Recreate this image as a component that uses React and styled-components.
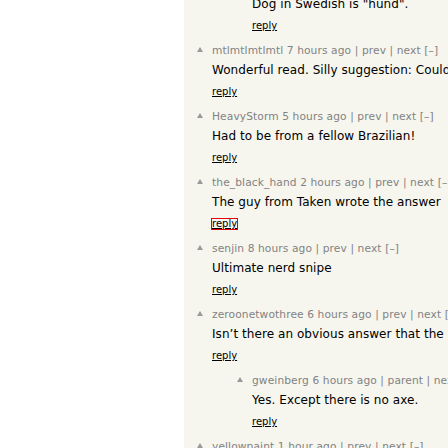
import React from 'react';
import styled, { createGlobalStyle } from 'styled-components';

const comments = [
    { level: 1, user: "", age: "", text: "Dog in Swedish is \"hund\".", hidden: true },
    { level: 0, user: "mtlmtlmtlmtl", age: "7 hours ago", nav: "prev", text: "Wonderful read. Silly suggestion: Could you add a map of where each word is used?" },
    { level: 0, user: "HeavyStorm", age: "5 hours ago", nav: "prev", text: "Had to be from a fellow Brazilian!" },
    { level: 0, user: "the_black_hand", age: "2 hours ago", nav: "prev", text: "The guy from Taken wrote the answer", focused: true },
    { level: 0, user: "senjin", age: "8 hours ago", nav: "prev", text: "Ultimate nerd snipe" },
    { level: 0, user: "zeroonetwothree", age: "6 hours ago", nav: "prev", text: "Isn\u2019t there an obvious answer that the article somehow missed?" },
    { level: 1, user: "gweinberg", age: "6 hours ago", nav: "parent", text: "Yes. Except there is no axe." },
    { level: 0, user: "yellowpaint", age: "1 hour ago", nav: "prev", text: "Fun read." },
];

function App() {
    return (
        <>
            <GlobalStyle />
            <Page>
                <Gutter />
                <Thread>
                    <List>
                        {comments.map((c, i) => (
                            <Comment key={i} $level={c.level}>
                                <Vote>
                                    {!c.hidden && <Arrow />}
                                </Vote>
                                <Body>
                                    <Meta>
                                        {c.hidden ? "\u00A0" : (
                                            <>
                                                <MetaLink>{c.user}</MetaLink> <MetaLink>{c.age}</MetaLink>
                                                {" | "}<MetaLink>{c.nav}</MetaLink>
                                                {" | "}<MetaLink>next</MetaLink> <MetaLink>[–]</MetaLink>
                                            </>
                                        )}
                                    </Meta>
                                    <Text>{c.text}</Text>
                                    <ReplyRow>
                                        <Reply $focused={c.focused}>reply</Reply>
                                    </ReplyRow>
                                </Body>
                            </Comment>
                        ))}
                    </List>
                </Thread>
            </Page>
        </>
    );
}

const GlobalStyle = createGlobalStyle`
    html, body {
        margin: 0;
        padding: 0;
        background: #ffffff;
        overflow: hidden;
    }
    body {
        font-family: "DejaVu Sans", Verdana, Geneva, sans-serif;
    }
`;

const Page = styled.div`
    display: flex;
    width: 448px;
    height: 448px;
    overflow: hidden;
`;

const Gutter = styled.div`
    flex: none;
    width: 184px;
    background: #ffffff;
`;

const Thread = styled.div`
    flex: none;
    width: 760px;
    background: #f6f6ef;
    padding-left: 13px;
`;

// the thread is scrolled: the first visible comment's header sits above the window
const List = styled.div`
    margin-top: -22px;
`;

const Comment = styled.div`
    display: flex;
    padding-left: ${props => props.$level * 40}px;
    padding-bottom: 12px;
    white-space: nowrap;
`;

const Vote = styled.div`
    flex: none;
    width: 15px;
    padding-top: 3px;
`;

const Arrow = styled.div`
    width: 0;
    height: 0;
    border-left: 3px solid transparent;
    border-right: 3px solid transparent;
    border-bottom: 5px solid #9a9a9a;
`;

const Body = styled.div`
    display: flex;
    flex-direction: column;
`;

const Meta = styled.div`
    height: 13px;
    font-size: 10.67px;
    line-height: 13px;
    letter-spacing: 0.1px;
    color: #828282;
`;

const MetaLink = styled.span`
    color: #828282;
`;

const Text = styled.div`
    margin-top: 6px;
    height: 14px;
    font-size: 12px;
    line-height: 14px;
    letter-spacing: 0.06px;
    color: #000000;
`;

const ReplyRow = styled.div`
    margin-top: 9px;
    height: 12px;
    font-size: 10px;
    line-height: 12px;
`;

const Reply = styled.span`
    display: inline-block;
    font-size: 10px;
    line-height: 12px;
    color: #000000;
    text-decoration: underline;
    ${props => props.$focused && `
    outline: 1px solid #e8000b;
    outline-offset: -1px;
    margin-left: -1px;
    padding: 0 1px;
    `}
`;

export default App;
